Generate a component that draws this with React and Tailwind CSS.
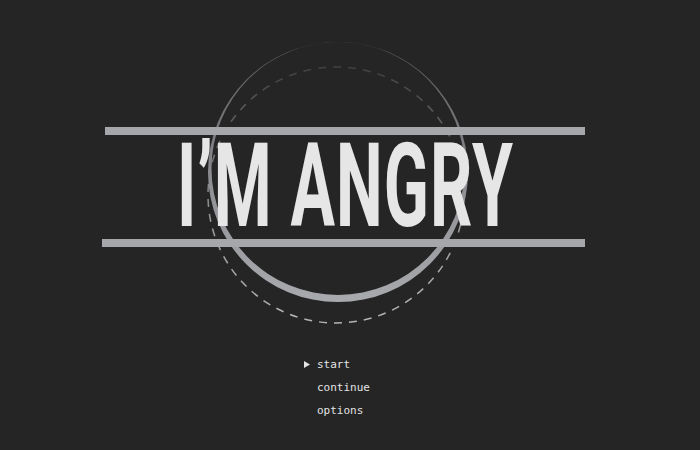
export default function App() {
  const menu = ["start", "continue", "options"];

  return (
    <div className="relative w-full h-[450px] bg-[#252525] overflow-hidden">
      {/* emblem rings behind the title */}
      <svg
        className="absolute left-0 top-0"
        width="700"
        height="450"
        viewBox="0 0 700 450"
      >
        <defs>
          <linearGradient id="ringFade" x1="0" y1="0" x2="0" y2="1">
            <stop offset="0" stopColor="#555557" />
            <stop offset="0.55" stopColor="#8f9094" />
            <stop offset="1" stopColor="#a9aaae" />
          </linearGradient>
          <linearGradient id="dashFade" x1="0" y1="0" x2="0" y2="1">
            <stop offset="0" stopColor="#404042" />
            <stop offset="0.6" stopColor="#9a9a9c" />
            <stop offset="1" stopColor="#b4b4b6" />
          </linearGradient>
        </defs>
        <circle
          cx="336"
          cy="195"
          r="128"
          fill="none"
          stroke="url(#dashFade)"
          strokeWidth="1.5"
          strokeDasharray="8 7"
        />
        <path
          fillRule="evenodd"
          fill="url(#ringFade)"
          d="M208 172 a130 130 0 1 0 260 0 a130 130 0 1 0 -260 0 Z M211.5 168.5 a126.5 126.5 0 1 0 253 0 a126.5 126.5 0 1 0 -253 0 Z"
        />
      </svg>

      <div className="relative flex flex-col pt-[127px]">
        <div className="ml-[105px] w-[480px] h-[8px] bg-[#a6a7ab]" />
        <div className="h-[104px] ml-[177px] relative">
          <span
            className="absolute left-0 top-[-7px] origin-left scale-x-[0.57] whitespace-nowrap text-[116px] leading-none font-bold tracking-[2px] text-[#e6e6e6]"
            style={{ fontFamily: "Roboto, sans-serif" }}
          >
            I’M ANGRY
          </span>
        </div>
        <div className="ml-[102px] w-[483px] h-[8px] bg-[#a6a7ab]" />

        {/* title menu */}
        <ul
          className="mt-[109px] ml-[304px] flex flex-col gap-[6px] text-[11px] leading-[17px] text-[#e4e4e4]"
          style={{ fontFamily: "'DejaVu Sans Mono', monospace" }}
        >
          {menu.map((item, i) => (
            <li key={item} className="flex items-center">
              <span className="w-[13px] flex items-center">
                {i === 0 && (
                  <svg width="6" height="7" viewBox="0 0 6 7">
                    <path d="M0 0 L6 3.5 L0 7 Z" fill="#e4e4e4" />
                  </svg>
                )}
              </span>
              <span>{item}</span>
            </li>
          ))}
        </ul>
      </div>
    </div>
  );
}
